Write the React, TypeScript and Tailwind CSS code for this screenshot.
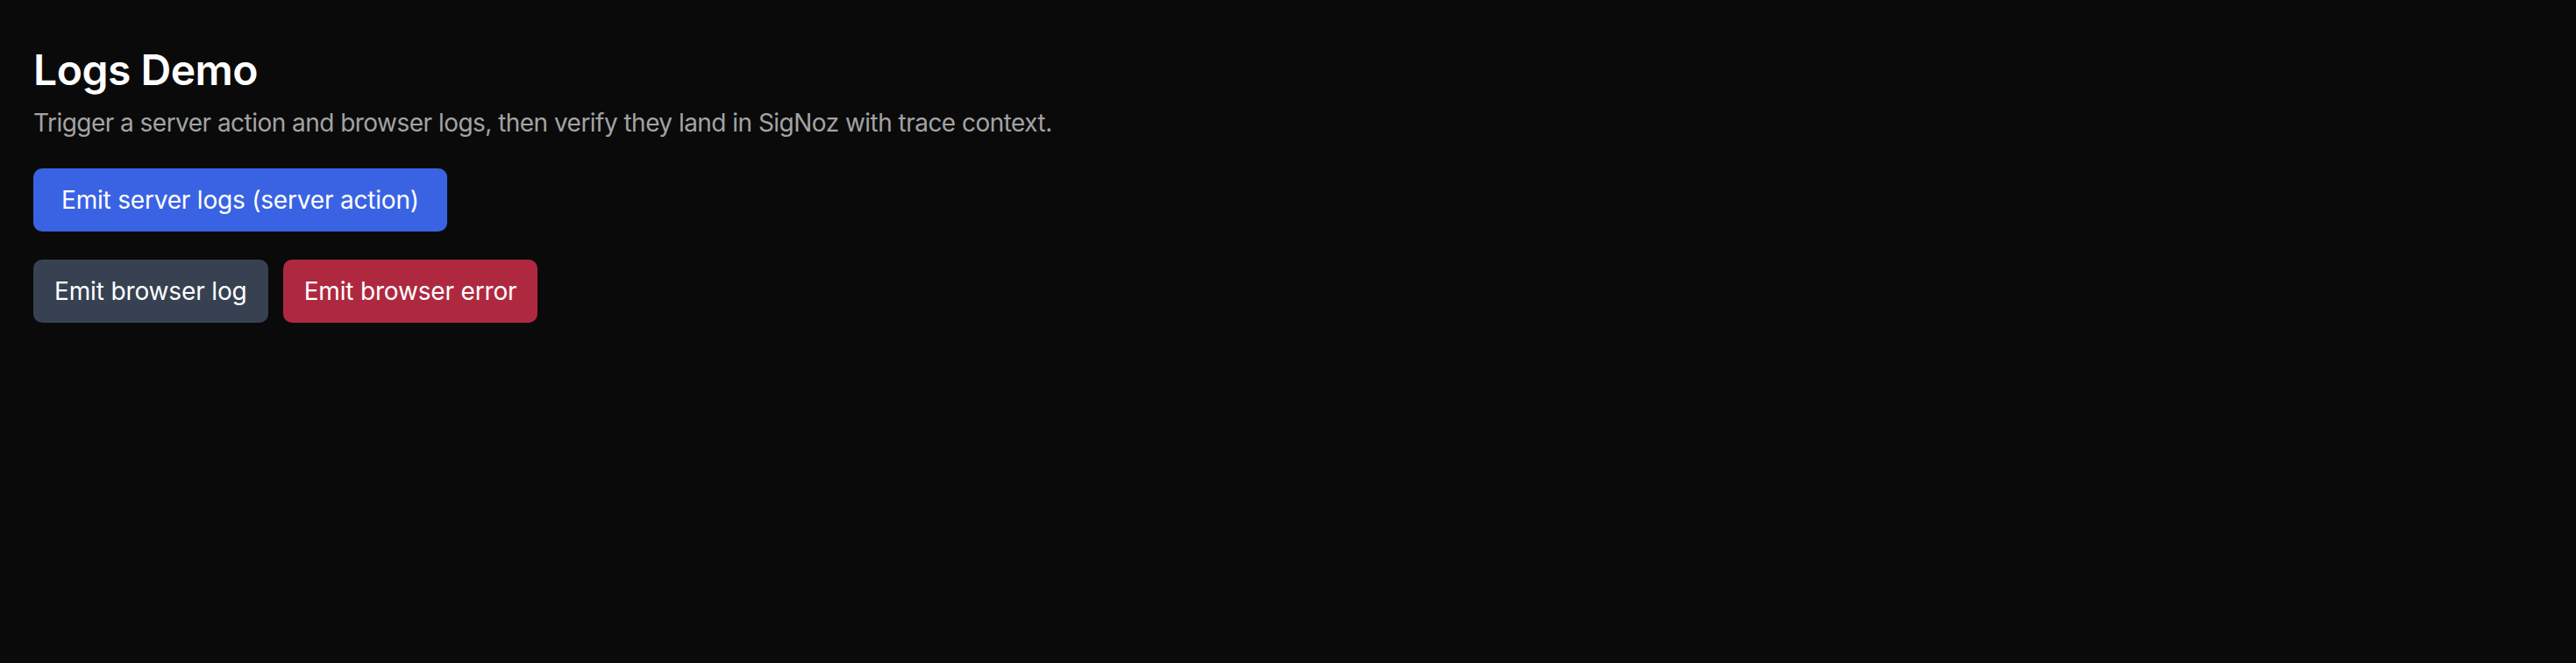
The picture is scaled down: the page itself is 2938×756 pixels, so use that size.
import React from "react";

export default function App() {
  return (
    <div className="min-h-screen w-full bg-[#0a0a0a] text-white" style={{ fontFamily: "Inter, 'Noto Sans', sans-serif" }}>
      <main className="flex flex-col items-start pl-[38px] pt-[48px]">
        <h1 className="text-[48px] leading-[64px] font-semibold tracking-[-0.01em] text-white">Logs Demo</h1>
        <p className="mt-[8px] text-[28px] leading-[40px] text-[#a3a3a3] tracking-[-0.019em]">
          Trigger a server action and browser logs, then verify they land in SigNoz with trace context.
        </p>
        <div className="mt-[32px] flex">
          <button className="h-[72px] rounded-[10px] bg-[#3a63e3] px-[32px] text-[28px] leading-[40px] font-normal text-white tracking-[-0.007em]">
            Emit server logs (server action)
          </button>
        </div>
        <div className="mt-[32px] flex gap-[17px]">
          <button className="h-[72px] rounded-[10px] bg-[#374151] px-[24px] text-[28px] leading-[40px] font-normal text-white tracking-[-0.005em]">
            Emit browser log
          </button>
          <button className="h-[72px] rounded-[10px] bg-[#ae2940] px-[24px] text-[28px] leading-[40px] font-normal text-white tracking-[-0.006em]">
            Emit browser error
          </button>
        </div>
      </main>
    </div>
  );
}
